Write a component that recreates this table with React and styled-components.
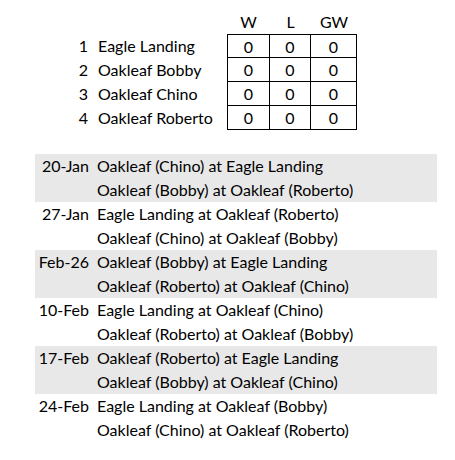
import React from "react";
import styled, { createGlobalStyle } from "styled-components";

const GlobalStyle = createGlobalStyle`
  body {
    margin: 0;
    background: #ffffff;
    font-family: "Lato", "Open Sans", sans-serif;
    color: #000000;
  }
`;

const teams = ["Eagle Landing", "Oakleaf Bobby", "Oakleaf Chino", "Oakleaf Roberto"];

const schedule = [
  { date: "20-Jan", games: ["Oakleaf (Chino) at Eagle Landing", "Oakleaf (Bobby) at Oakleaf (Roberto)"] },
  { date: "27-Jan", games: ["Eagle Landing at Oakleaf (Roberto)", "Oakleaf (Chino) at Oakleaf (Bobby)"] },
  { date: "Feb-26", games: ["Oakleaf (Bobby) at Eagle Landing", "Oakleaf (Roberto) at Oakleaf (Chino)"] },
  { date: "10-Feb", games: ["Eagle Landing at Oakleaf (Chino)", "Oakleaf (Roberto) at Oakleaf (Bobby)"] },
  { date: "17-Feb", games: ["Oakleaf (Roberto) at Eagle Landing", "Oakleaf (Bobby) at Oakleaf (Chino)"] },
  { date: "24-Feb", games: ["Eagle Landing at Oakleaf (Bobby)", "Oakleaf (Chino) at Oakleaf (Roberto)"] },
];

const App = () => {
  return (
    <Sheet>
      <GlobalStyle />
      <Standings>
        <Blank />
        <Blank />
        <Head>W</Head>
        <Head>L</Head>
        <Head>GW</Head>
        {teams.map((team, i) => (
          <React.Fragment key={team}>
            <Rank>{i + 1}</Rank>
            <Team>{team}</Team>
            <Score $first $top={i === 0}>0</Score>
            <Score $top={i === 0}>0</Score>
            <Score $top={i === 0}>0</Score>
          </React.Fragment>
        ))}
      </Standings>
      <Spacer />
      {schedule.map((week, i) => (
        <Week key={week.date} $shaded={i % 2 === 0}>
          <DateCell>{week.date}</DateCell>
          <Game>{week.games[0]}</Game>
          <DateCell />
          <Game>{week.games[1]}</Game>
        </Week>
      ))}
    </Sheet>
  );
};

export default App;

const Sheet = styled.div`
  width: 402px;
  margin-left: 35px;
  padding-top: 10px;
  font-size: 16px;
`;

const Standings = styled.div`
  display: grid;
  grid-template-columns: 57px 135px 43px 41px 46px;
  grid-auto-rows: 24px;
`;

const Blank = styled.div``;

const Head = styled.div`
  text-align: center;
  line-height: 24px;
`;

const Rank = styled.div`
  text-align: right;
  padding-right: 4px;
  line-height: 24px;
`;

const Team = styled.div`
  padding-left: 6px;
  line-height: 24px;
  white-space: nowrap;
`;

const Score = styled.div`
  text-align: center;
  line-height: 23px;
  border-right: 1px solid #000;
  border-bottom: 1px solid #000;
  border-left: ${(p) => (p.$first ? "1px solid #000" : "none")};
  border-top: ${(p) => (p.$top ? "1px solid #000" : "none")};
  box-sizing: border-box;
`;

const Spacer = styled.div`
  height: 24px;
`;

const Week = styled.div`
  display: grid;
  grid-template-columns: 57px 1fr;
  grid-auto-rows: 24px;
  background: ${(p) => (p.$shaded ? "#e8e8e8" : "transparent")};
`;

const DateCell = styled.div`
  text-align: right;
  padding-right: 3px;
  line-height: 24px;
`;

const Game = styled.div`
  padding-left: 5px;
  line-height: 24px;
  white-space: nowrap;
`;
